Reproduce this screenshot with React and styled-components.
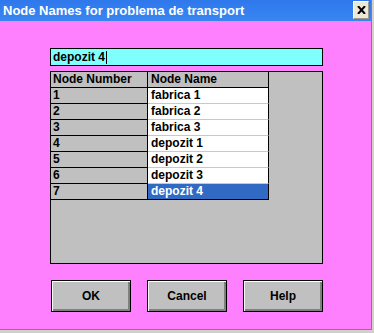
import React from "react";
import styled, { createGlobalStyle } from "styled-components";

const Global = createGlobalStyle`
  html, body { margin: 0; padding: 0; background: #d4d0c8; }
  body { width: 374px; height: 333px; overflow: hidden; }
`;

const Frame = styled.div`
  width: 371px;
  height: 329px;
  border-right: 1px solid #808080;
  border-bottom: 1px solid #808080;
  display: flex;
  flex-direction: column;
  font-family: "Liberation Sans", Arial, sans-serif;
`;

const TitleBar = styled.div`
  height: 21px;
  flex: none;
  background: linear-gradient(#2f78ec, #3886f2);
  display: flex;
  align-items: center;
  justify-content: space-between;
  padding: 0 2px 0 3px;
  box-sizing: border-box;
`;

const Title = styled.span`
  color: #fff;
  font-weight: bold;
  font-size: 13px;
`;

const CloseBtn = styled.div`
  width: 16px;
  height: 18px;
  background: #ece9d8;
  border: 1px solid #fff;
  border-right-color: #9c9a90;
  border-bottom-color: #9c9a90;
  box-sizing: border-box;
  display: flex;
  align-items: center;
  justify-content: center;
  margin-top: -2px;
`;

const Client = styled.div`
  flex: 1;
  background: #ff80ff;
  padding: 27px 0 0 50px;
  display: flex;
  flex-direction: column;
`;

const Input = styled.div`
  width: 273px;
  height: 18px;
  box-sizing: border-box;
  border: 1px solid #000;
  background: #80ffff;
  font-size: 12px;
  font-weight: bold;
  line-height: 16px;
  padding-left: 2px;
  display: flex;
  align-items: center;
`;

const Caret = styled.span`
  display: inline-block;
  width: 1px;
  height: 13px;
  background: #000;
  margin-left: 1px;
`;

const GridBox = styled.div`
  margin-top: 5px;
  width: 273px;
  height: 193px;
  box-sizing: border-box;
  border: 1px solid #000;
  background: #c0c0c0;
`;

const Row = styled.div`
  display: flex;
  height: 16px;
`;

const NumCell = styled.div`
  width: 94px;
  height: 15px;
  padding-left: 2px;
  border-right: 1px solid #000;
  border-bottom: 1px solid #000;
  background: #c0c0c0;
  font-size: 12px;
  font-weight: bold;
  line-height: 15px;
`;

const NameCell = styled.div`
  width: 117px;
  height: 15px;
  padding-left: 3px;
  border-right: 1px solid #000;
  border-bottom: 1px solid ${(p) => (p.$last || p.$header ? "#000" : "#c8c8c8")};
  background: ${(p) => (p.$header ? "#c0c0c0" : p.$selected ? "#316ac5" : "#fff")};
  color: ${(p) => (p.$selected ? "#fff" : "#000")};
  font-size: 12px;
  font-weight: bold;
  line-height: 15px;
`;

const ButtonRow = styled.div`
  margin-top: 16px;
  margin-left: 1px;
  display: flex;
  gap: 16px;
`;

const Button = styled.div`
  width: 80px;
  height: 32px;
  box-sizing: border-box;
  border: 1px solid #000;
  background: #c0c0c0;
  box-shadow: inset 1px 1px 0 #fff, inset -2px -2px 0 #808080;
  display: flex;
  align-items: center;
  justify-content: center;
  font-size: 12px;
  font-weight: bold;
  color: #000;
  padding-bottom: 1px;
`;

const rows = [
  ["1", "fabrica 1"],
  ["2", "fabrica 2"],
  ["3", "fabrica 3"],
  ["4", "depozit 1"],
  ["5", "depozit 2"],
  ["6", "depozit 3"],
  ["7", "depozit 4"],
];

export default function App() {
  return (
    <>
      <Global />
      <Frame>
        <TitleBar>
          <Title>Node Names for problema de transport</Title>
          <CloseBtn>
            <svg width="9" height="8" viewBox="0 0 9 8">
              <path d="M1 0 L8 8 M8 0 L1 8" stroke="#000" strokeWidth="2" />
            </svg>
          </CloseBtn>
        </TitleBar>
        <Client>
          <Input>
            depozit 4<Caret />
          </Input>
          <GridBox>
            <Row>
              <NumCell>Node Number</NumCell>
              <NameCell $header>Node Name</NameCell>
            </Row>
            {rows.map(([n, name], i) => (
              <Row key={n}>
                <NumCell>{n}</NumCell>
                <NameCell $last={i === rows.length - 1} $selected={i === rows.length - 1}>
                  {name}
                </NameCell>
              </Row>
            ))}
          </GridBox>
          <ButtonRow>
            <Button>OK</Button>
            <Button>Cancel</Button>
            <Button>Help</Button>
          </ButtonRow>
        </Client>
      </Frame>
    </>
  );
}
